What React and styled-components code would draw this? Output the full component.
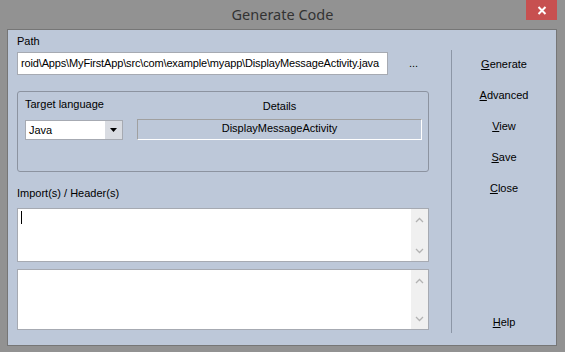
import React from 'react'
import styled, { createGlobalStyle } from 'styled-components'

const GlobalStyle = createGlobalStyle`
  html, body {
    margin: 0;
    padding: 0;
    background: #929292;
  }
  * { box-sizing: border-box; }
`

const Window = styled.div`
  width: 565px;
  height: 352px;
  background: #929292;
  display: flex;
  flex-direction: column;
  font-family: "Liberation Sans", Arial, sans-serif;
  font-size: 11px;
  color: #000;
`

const TitleBar = styled.div`
  height: 29px;
  display: grid;
  grid-template-columns: 1fr auto 1fr;
  align-items: start;
`

const Title = styled.div`
  grid-column: 2;
  font-family: "Noto Sans", "Open Sans", sans-serif;
  font-size: 14.5px;
  line-height: 28px;
  color: #333;
`

const CloseButton = styled.div`
  grid-column: 3;
  justify-self: end;
  width: 31px;
  height: 20px;
  margin-right: 8px;
  background: #c75050;
  display: flex;
  align-items: center;
  justify-content: center;
`

const Client = styled.div`
  flex: 1;
  margin: 0 8px 6px 7px;
  border: 1px solid #767676;
  background: #bdc8d9;
  display: flex;
`

const LeftPane = styled.div`
  width: 443px;
  padding: 5px 22px 0 9px;
  display: flex;
  flex-direction: column;
`

const Separator = styled.div`
  width: 1px;
  background: #8c96a6;
  margin: 20px 0 12px;
`

const RightPane = styled.div`
  flex: 1;
  padding: 23px 0 11px;
  display: flex;
  flex-direction: column;
  align-items: center;
  gap: 8px;
`

const Label = styled.div`
  line-height: 13px;
  text-align: ${p => p.$center ? 'center' : 'left'};
  margin-top: ${p => p.$mt || 0}px;
`

const PathRow = styled.div`
  display: flex;
  align-items: center;
  margin-top: 4px;
`

const TextBox = styled.div`
  width: 371px;
  height: 23px;
  background: #fff;
  border: 1px solid #a6aab2;
  box-shadow: inset 0 0 0 1px #fff;
  padding: 0 0 0 3px;
  line-height: 21px;
  letter-spacing: -0.15px;
  white-space: nowrap;
  overflow: hidden;
`

const Dots = styled.div`
  margin-left: 21px;
  margin-top: -2px;
`

const Group = styled.div`
  margin-top: 16px;
  height: 81px;
  border: 1px solid #8c93a0;
  border-radius: 3px;
  padding: 6px 0 0 7px;
  display: grid;
  grid-template-columns: 98px 285px;
  grid-template-rows: 13px auto;
  column-gap: 14px;
  row-gap: 8px;
  align-items: start;
`

const Combo = styled.div`
  height: 20px;
  margin-top: 1px;
  background: #fff;
  border: 1px solid #a6aab2;
  display: flex;
`

const ComboText = styled.div`
  flex: 1;
  padding-left: 3px;
  line-height: 18px;
`

const ComboButton = styled.div`
  width: 17px;
  background: #d9dce2;
  display: flex;
  align-items: center;
  justify-content: center;
`

const DetailsBox = styled.div`
  height: 21px;
  border: 1px solid;
  border-color: #a0a0a0 #fff #fff #a0a0a0;
  text-align: center;
  line-height: 16px;
`

const Memo = styled.div`
  height: ${p => p.$h}px;
  margin-top: ${p => p.$mt}px;
  background: #fff;
  border: 1px solid #a6aab2;
  display: flex;
`

const MemoBody = styled.div`
  flex: 1;
  padding: 2px 0 0 3px;
`

const Caret = styled.div`
  width: 1px;
  height: 13px;
  background: #000;
`

const ScrollBar = styled.div`
  width: 17px;
  background: #f0f0f0;
  display: flex;
  flex-direction: column;
  justify-content: space-between;
  align-items: center;
  padding: 8px 0 7px;
`

const ActionButton = styled.div`
  width: 75px;
  height: 23px;
  line-height: 23px;
  text-align: center;
  margin-top: ${p => p.$push ? 'auto' : '0'};
`

function Chevron({ up }) {
  return (
    <svg width="9" height="6" viewBox="0 0 9 6">
      <path
        d={up ? 'M1 5 L4.5 1.5 L8 5' : 'M1 1 L4.5 4.5 L8 1'}
        fill="none"
        stroke="#b3b3b3"
        strokeWidth="1.3"
      />
    </svg>
  )
}

function MemoField({ h, mt, caret }) {
  return (
    <Memo $h={h} $mt={mt}>
      <MemoBody>{caret && <Caret />}</MemoBody>
      <ScrollBar>
        <Chevron up />
        <Chevron />
      </ScrollBar>
    </Memo>
  )
}

export default function App() {
  const actions = [
    ['G', 'enerate'],
    ['A', 'dvanced'],
    ['V', 'iew'],
    ['S', 'ave'],
    ['C', 'lose'],
  ]
  return (
    <>
      <GlobalStyle />
      <Window>
        <TitleBar>
          <Title>Generate Code</Title>
          <CloseButton>
            <svg width="10" height="9" viewBox="0 0 10 9">
              <path d="M1.5 1 L8.5 8 M8.5 1 L1.5 8" stroke="#fff" strokeWidth="2" />
            </svg>
          </CloseButton>
        </TitleBar>
        <Client>
          <LeftPane>
            <Label>Path</Label>
            <PathRow>
              <TextBox>roid\Apps\MyFirstApp\src\com\example\myapp\DisplayMessageActivity.java</TextBox>
              <Dots>...</Dots>
            </PathRow>
            <Group>
              <Label>Target language</Label>
              <Label $center $mt={2}>Details</Label>
              <Combo>
                <ComboText>Java</ComboText>
                <ComboButton>
                  <svg width="7" height="4" viewBox="0 0 7 4">
                    <path d="M0 0 H7 L3.5 4 Z" fill="#000" />
                  </svg>
                </ComboButton>
              </Combo>
              <DetailsBox>DisplayMessageActivity</DetailsBox>
            </Group>
            <Label $mt={15}>Import(s) / Header(s)</Label>
            <MemoField h={54} mt={8} caret />
            <MemoField h={61} mt={7} />
          </LeftPane>
          <Separator />
          <RightPane>
            {actions.map(([k, rest]) => (
              <ActionButton key={k}><u>{k}</u>{rest}</ActionButton>
            ))}
            <ActionButton $push><u>H</u>elp</ActionButton>
          </RightPane>
        </Client>
      </Window>
    </>
  )
}
